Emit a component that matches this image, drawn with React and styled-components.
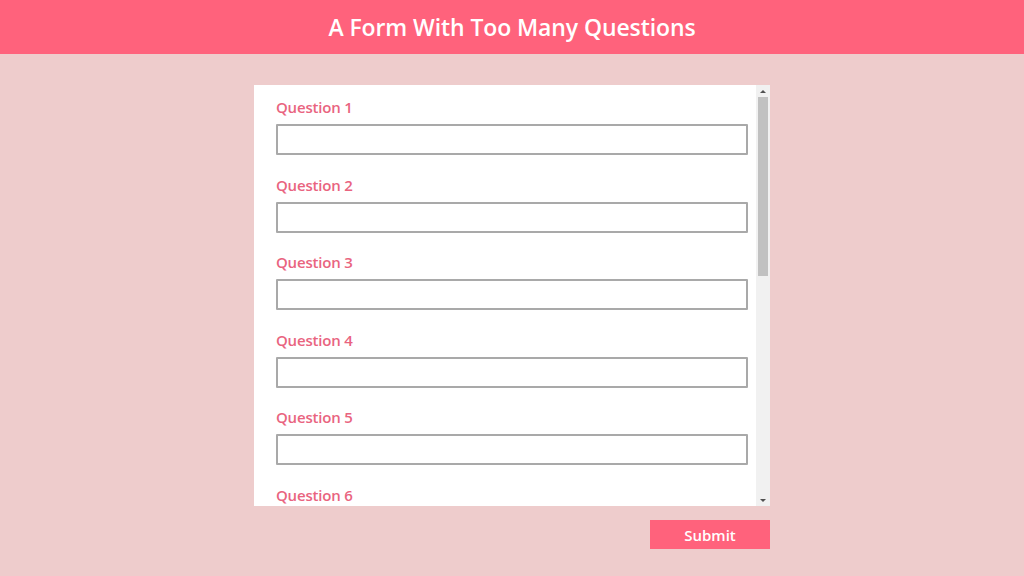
import React from "react";
import styled, { createGlobalStyle } from "styled-components";

const colours = {
  pink: "#ff627c",
  label: "#e9647f",
  page: "#eecccc",
  border: "#a9a9a9",
  track: "#f1f1f1",
  thumb: "#c1c1c1",
  arrow: "#505050",
};

const GlobalStyle = createGlobalStyle`
  html, body {
    margin: 0;
    padding: 0;
    background: ${colours.page};
    font-family: "Open Sans", "Noto Sans", sans-serif;
  }
`;

const Page = styled.div`
  min-height: 576px;
  display: flex;
  flex-direction: column;
  align-items: center;
`;

const Header = styled.header`
  align-self: stretch;
  height: 54px;
  background: ${colours.pink};
  color: #fff;
  display: flex;
  align-items: center;
  justify-content: center;
  font-size: 23px;
  font-weight: 600;
  letter-spacing: -0.1px;
`;

const Form = styled.form`
  margin-top: 31px;
  width: 516px;
  display: flex;
  flex-direction: column;
  align-items: flex-end;
  gap: 14px;
`;

const Panel = styled.div`
  width: 100%;
  height: 421px;
  background: #fff;
  display: flex;
`;

const Questions = styled.div`
  flex: 1;
  overflow: hidden;
  padding: 12px 0 0 22px;
`;

const ScrollTrack = styled.div`
  width: 14px;
  background: ${colours.track};
  display: flex;
  flex-direction: column;
  align-items: center;
`;

const ScrollArrow = styled.div`
  height: 12px;
  display: flex;
  align-items: center;
  justify-content: center;

  &::before {
    content: "";
    border-left: 3px solid transparent;
    border-right: 3px solid transparent;
    ${(p) =>
      p.$down
        ? `border-top: 3px solid ${colours.arrow};`
        : `border-bottom: 3px solid ${colours.arrow};`}
  }
`;

const ScrollThumb = styled.div`
  width: 10px;
  height: 179px;
  background: ${colours.thumb};
`;

const Spacer = styled.div`
  flex: 1;
`;

const Field = styled.div`
  display: flex;
  flex-direction: column;
  gap: 7px;
  margin-bottom: 19.5px;
`;

const Label = styled.label`
  color: ${colours.label};
  font-size: 15px;
  font-weight: 600;
  line-height: 20px;
  letter-spacing: -0.2px;
`;

const Input = styled.input`
  width: 472px;
  height: 31px;
  box-sizing: border-box;
  border: 2px solid ${colours.border};
  border-radius: 1px;
  padding: 0 6px;
  font-size: 14px;
  font-family: inherit;
`;

const SubmitButton = styled.button`
  width: 120px;
  height: 29px;
  border: none;
  background: ${colours.pink};
  color: #fff;
  font-family: inherit;
  font-size: 15px;
  font-weight: 600;
  cursor: pointer;
`;

const questions = Array.from({ length: 6 }, (_, i) => `Question ${i + 1}`);

const App = () => {
  return (
    <Page>
      <GlobalStyle />
      <Header>A Form With Too Many Questions</Header>
      <Form onSubmit={(e) => e.preventDefault()}>
        <Panel>
          <Questions>
            {questions.map((q, i) => (
              <Field key={q}>
                <Label htmlFor={`q${i}`}>{q}</Label>
                <Input id={`q${i}`} type="text" />
              </Field>
            ))}
          </Questions>
          <ScrollTrack>
            <ScrollArrow />
            <ScrollThumb />
            <Spacer />
            <ScrollArrow $down />
          </ScrollTrack>
        </Panel>
        <SubmitButton type="submit">Submit</SubmitButton>
      </Form>
    </Page>
  );
};

export default App;
